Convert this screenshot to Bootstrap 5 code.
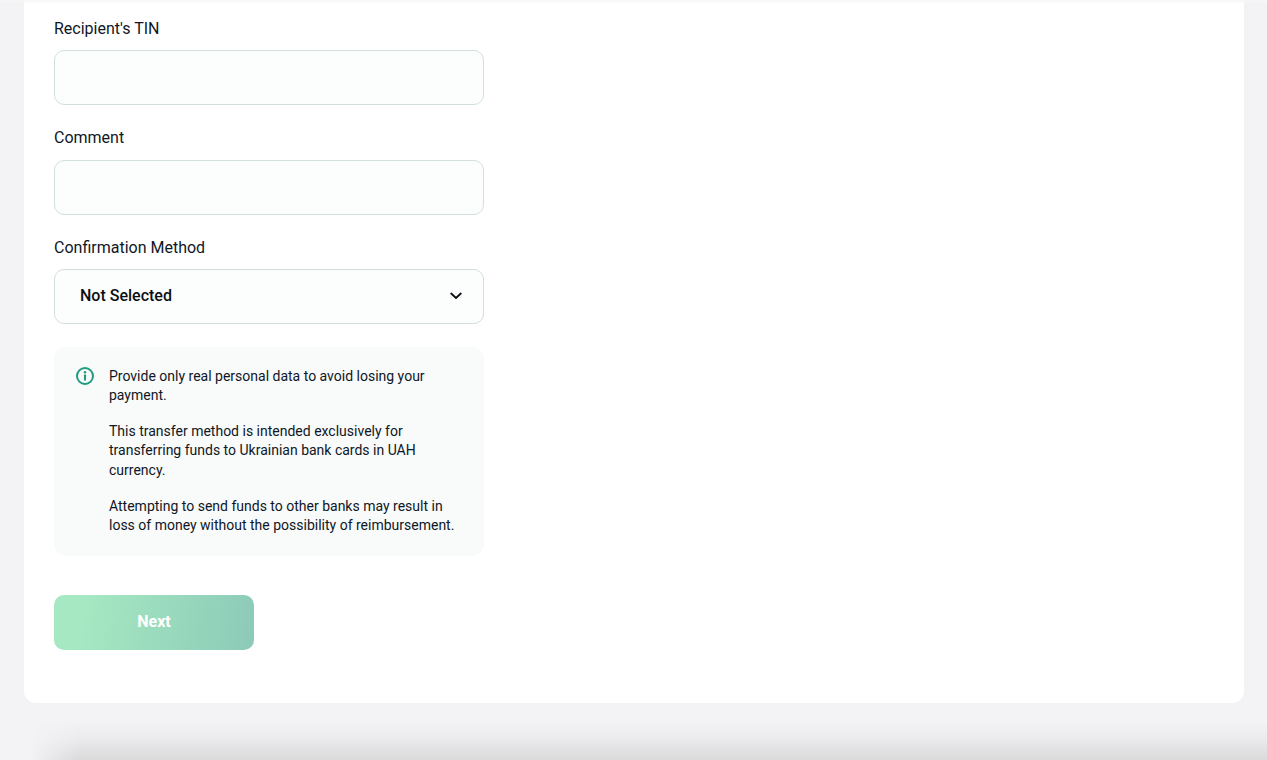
<!DOCTYPE html>
<html lang="en">
<head>
<meta charset="utf-8">
<title>Transfer</title>
<link href="https://cdn.jsdelivr.net/npm/bootstrap@5.3.0/dist/css/bootstrap.min.css" rel="stylesheet">
<style>
html, body { height: 760px; overflow: hidden; }
body { background: #f3f3f5; font-family: Roboto, "Liberation Sans", sans-serif; color: #0e1726; position: relative; }
.sheet { margin: 0 23px 0 24px; height: 703px; background: #fff; border-radius: 0 0 12px 12px; padding: 16px 30px 0; position: relative; z-index: 1; }
.top-fade { position: absolute; left: 0; right: 0; top: 0; height: 4px; background: linear-gradient(#f6f6f7, rgba(255,255,255,0)); z-index: 2; }
.field-col { width: 430px; }
.field-label { display: block; font-size: 16px; line-height: 25px; margin-bottom: 9px; color: #0e1726; }
.field-label.roomy { margin-bottom: 10px; }
.field-box.form-control { height: 55px; background-color: #fcfdfd; border: 1px solid #d2dfdd; border-radius: 10px; box-shadow: none; }
.field-gap { margin-bottom: 20px; }
.picker { height: 55px; background: #fcfdfd; border: 1px solid #d2dfdd; border-radius: 10px; padding: 0 21px 2px 25px; font-size: 16px; font-weight: 500; color: #0b0f14; }
.notice { margin-top: 23px; height: 209px; background: #f9fafa; border-radius: 12px; padding: 19.5px 20px 0 22px; font-size: 14px; line-height: 19.5px; color: #0e1726; }
.notice p { margin: 0 0 16.5px; }
.notice p.lead-note { margin-bottom: 16px; }
.notice svg { flex: none; margin-right: 15px; margin-top: -0.5px; }
.next-btn.btn { width: 200px; height: 55px; margin-top: 39px; padding-bottom: 8px; border: 0; border-radius: 10px; background: linear-gradient(100deg, #a6e8c2 15%, #8ccab8 100%); color: #fff; font-size: 16px; font-weight: 700; opacity: 1; }
.under-glow { position: absolute; left: 30px; right: 0; bottom: 0; height: 38px; background: linear-gradient(to bottom, rgba(0,0,0,0), rgba(0,0,0,.03) 45%, rgba(0,0,0,.1)); -webkit-mask-image: linear-gradient(to right, transparent, #000 50px); mask-image: linear-gradient(to right, transparent, #000 50px); }
</style>
</head>
<body>
<div class="top-fade"></div>
<main class="sheet">
  <form class="field-col">
    <div class="field-gap">
      <label class="field-label" for="tin">Recipient's TIN</label>
      <input class="form-control field-box" id="tin" type="text">
    </div>
    <div class="field-gap">
      <label class="field-label roomy" for="comment">Comment</label>
      <input class="form-control field-box" id="comment" type="text">
    </div>
    <div>
      <span class="field-label">Confirmation Method</span>
      <div class="picker d-flex align-items-center justify-content-between">
        <span>Not Selected</span>
        <svg width="12" height="8" viewBox="0 0 12 8" fill="none" aria-hidden="true"><path d="M1.2 1.5 6 6l4.8-4.5" stroke="#0b0f14" stroke-width="1.8" stroke-linecap="round" stroke-linejoin="round"/></svg>
      </div>
    </div>
    <div class="notice d-flex">
      <svg width="18" height="20" viewBox="0 0 18 20" fill="none" aria-hidden="true"><circle cx="9" cy="10" r="8" stroke="#1f9d80" stroke-width="2"/><path d="M9 9.2v4.6" stroke="#1f9d80" stroke-width="2.1" stroke-linecap="round"/><circle cx="9" cy="6.3" r="1.25" fill="#1f9d80"/></svg>
      <div>
        <p class="lead-note">Provide only real personal data to avoid losing your payment.</p>
        <p>This transfer method is intended exclusively for transferring funds to Ukrainian bank cards in UAH currency.</p>
        <p class="mb-0">Attempting to send funds to other banks may result in loss of money without the possibility of reimbursement.</p>
      </div>
    </div>
    <button class="btn next-btn d-block" type="button">Next</button>
  </form>
</main>
<div class="under-glow"></div>
</body>
</html>
